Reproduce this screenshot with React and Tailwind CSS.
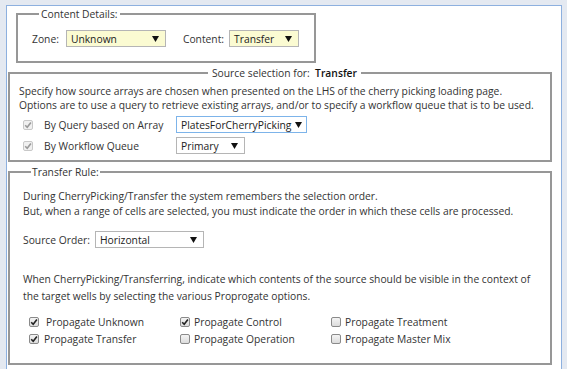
import React from "react";

const font = { fontFamily: "'Open Sans', 'Noto Sans', sans-serif" };

function Caret() {
  return (
    <svg width="7" height="6" viewBox="0 0 7 6" className="shrink-0">
      <polygon points="0,0 7,0 3.5,6" fill="#111" />
    </svg>
  );
}

function Select({ value, className }) {
  return (
    <div
      className={
        "flex h-[17px] items-center justify-between gap-[4px] border pl-[4px] text-[#222] " +
        className
      }
    >
      <span>{value}</span>
      <Caret />
    </div>
  );
}

function Check({ checked, disabled }) {
  return (
    <span
      className={
        "inline-flex h-[10px] w-[10px] shrink-0 items-center justify-center rounded-[2px] border " +
        (disabled
          ? "border-[#c8c8c8] bg-[#f0f0f0]"
          : "border-[#8a8a8a] bg-gradient-to-b from-[#f4f4f4] to-[#dcdcdc]")
      }
    >
      {checked && (
        <svg width="8" height="8" viewBox="0 0 8 8">
          <path
            d="M1.2 4.2 L3.2 6.2 L6.9 1.4"
            fill="none"
            stroke={disabled ? "#9a9a9a" : "#222"}
            strokeWidth="1.6"
          />
        </svg>
      )}
    </span>
  );
}

function Propagate({ label, checked, gap }) {
  return (
    <div className="flex h-[17px] items-center">
      <Check checked={checked} />
      <span className={gap}>{label}</span>
    </div>
  );
}

export default function App() {
  return (
    <div
      className="min-h-screen bg-[#e4e9f1] pt-[5px] pl-[6px] pr-[5px] text-[10.3px] leading-[14px] text-[#333]"
      style={font}
    >
      <div className="h-[380px] border border-[#8db0df] bg-white">
        {/* Content Details */}
        <fieldset className="ml-[9px] mt-[1px] w-[300px] border-2 border-[#979797] pb-[14px] pl-[14px] pt-[9px]">
          <legend className="ml-[7px] px-[2px]">Content Details:</legend>
          <div className="flex items-center">
            <span className="mr-[7px]">Zone:</span>
            <Select value="Unknown" className="w-[100px] border-[#b5b5b5] bg-[#fbfbd2] pr-[6px]" />
            <span className="ml-[17px] mr-[5px]">Content:</span>
            <Select value="Transfer" className="w-[70px] border-[#b5b5b5] bg-[#fbfbd2] pr-[6px]" />
          </div>
        </fieldset>

        {/* Source selection */}
        <fieldset className="ml-[1px] mt-[3px] w-[544px] border-2 border-[#979797] pb-[6px] pl-[9px] pt-[4px]">
          <legend className="mx-auto px-[4px]">
            Source selection for:&nbsp; <b className="font-semibold text-[#111]">Transfer</b>
          </legend>
          <p>Specify how source arrays are chosen when presented on the LHS of the cherry picking loading page.</p>
          <p>Options are to use a query to retrieve existing arrays, and/or to specify a workflow queue that is to be used.</p>
          <div className="mt-[4px] flex flex-col gap-[4px] pl-[4px]">
            <div className="flex items-center">
              <Check checked disabled />
              <span className="ml-[11px] w-[132px]">By Query based on Array</span>
              <Select value="PlatesForCherryPicking" className="w-[131px] border-[#7db4ea] bg-white pr-[4px]" />
            </div>
            <div className="flex items-center">
              <Check checked disabled />
              <span className="ml-[11px] w-[132px]">By Workflow Queue</span>
              <Select value="Primary" className="w-[69px] border-[#b5b5b5] bg-white pr-[6px]" />
            </div>
          </div>
        </fieldset>

        {/* Transfer Rule */}
        <fieldset className="ml-[1px] mt-[3px] w-[544px] border-2 border-[#979797] pb-[16px] pl-[13px] pt-[10px]">
          <legend className="ml-[8px] px-[1px]">Transfer Rule:</legend>
          <p className="leading-[15px]">During CherryPicking/Transfer the system remembers the selection order.</p>
          <p className="leading-[15px]">But, when a range of cells are selected, you must indicate the order in which these cells are processed.</p>
          <div className="mt-[12px] flex items-center">
            <span className="mr-[5px]">Source Order:</span>
            <Select value="Horizontal" className="w-[109px] border-[#b5b5b5] bg-white pr-[6px]" />
          </div>
          <p className="mt-[23px] leading-[17px]">
            When CherryPicking/Transferring, indicate which contents of the source should be visible in the context of
            <br />
            the target wells by selecting the various Proprogate options.
          </p>
          <div className="mt-[8px] grid grid-cols-[151px_151px_151px] pl-[6px]">
            <Propagate label="Propagate Unknown" checked gap="ml-[7px]" />
            <Propagate label="Propagate Control" checked gap="ml-[4px]" />
            <Propagate label="Propagate Treatment" gap="ml-[4px]" />
            <Propagate label="Propagate Transfer" checked gap="ml-[5px]" />
            <Propagate label="Propagate Operation" gap="ml-[4px]" />
            <Propagate label="Propagate Master Mix" gap="ml-[4px]" />
          </div>
        </fieldset>
      </div>
    </div>
  );
}
